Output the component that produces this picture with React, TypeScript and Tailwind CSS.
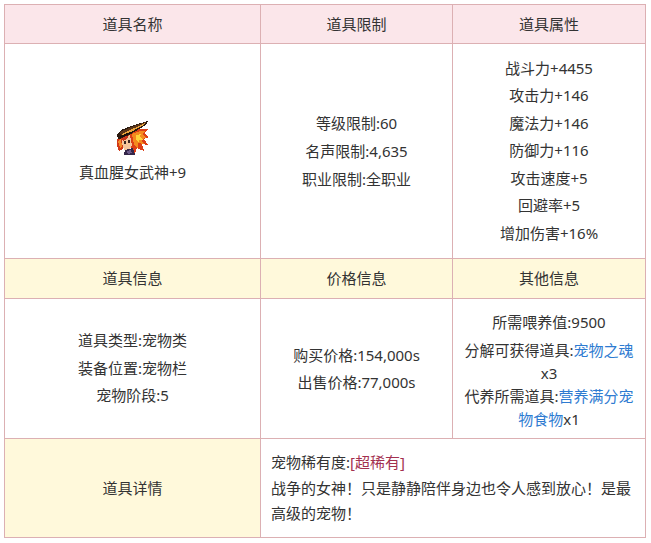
const font = { fontFamily: '"Noto Sans", "Noto Sans CJK SC", sans-serif' };

function PetSprite() {
  return (
    <svg width="32" height="34" viewBox="0 0 32 34" shapeRendering="crispEdges">
      {/* flames / hair */}
      <polygon points="12,12 22,8 31,8 27,12 32,16 27,18 31,24 25,23 27,30 20,27 18,33 14,26" fill="#dd3f17" />
      <polygon points="15,13 23,10 28,10 25,13 29,17 24,18 27,23 21,22 21,27 17,24" fill="#f48a1e" />
      <polygon points="19,14 24,13 23,16 26,19 22,19 22,22 19,19" fill="#ffd23a" />
      <polygon points="0,18 5,16 6,28 2,30 0,24" fill="#d23a18" />
      <polygon points="1,20 4,18 5,26 3,27" fill="#f28a2a" />
      {/* helmet */}
      <polygon points="0,14 4,9 14,5 24,2 31,0 29,4 22,8 14,13 6,17 1,18" fill="#2b1a10" />
      <polygon points="3,11 12,7 22,3 29,1 27,3 20,6 12,10 4,14" fill="#5a3418" />
      <polygon points="5,13 13,9 22,5 28,2 27,4 21,7 14,11 6,15" fill="#e9a33a" />
      <polygon points="2,16 8,13 16,10 14,12 8,15 3,17" fill="#1a100a" />
      {/* face */}
      <polygon points="6,17 13,14 15,24 12,30 7,29 5,22" fill="#f5c59c" />
      <polygon points="7,20 9,20 9,23 7,23" fill="#3a2320" />
      <polygon points="11,19 13,19 13,22 11,22" fill="#3a2320" />
      <polygon points="5,17 12,14 10,18 6,20" fill="#c9361b" />
      {/* body */}
      <polygon points="8,29 16,27 18,34 7,34" fill="#33264a" />
      <polygon points="10,30 14,29 15,32 11,33" fill="#6b5a8a" />
    </svg>
  );
}

function Link({ children }: { children: React.ReactNode }) {
  return <span className="text-[#2e7bd1]">{children}</span>;
}

export default function App() {
  const attrs = ["战斗力+4455", "攻击力+146", "魔法力+146", "防御力+116", "攻击速度+5", "回避率+5", "增加伤害+16%"];
  const limits = ["等级限制:60", "名声限制:4,635", "职业限制:全职业"];
  const info = ["道具类型:宠物类", "装备位置:宠物栏", "宠物阶段:5"];
  const prices = ["购买价格:154,000s", "出售价格:77,000s"];

  const cell = "border-r border-b border-[#dcb0b3] flex items-center justify-center text-center";

  return (
    <div className="bg-white w-[651px] h-[543px] pt-[4px] pl-[4px]" style={font}>
      <div className="grid grid-cols-[256px_192px_193px] grid-rows-[39px_215px_40px_140px_99px] w-[642px] border-l border-t border-[#dcb0b3] text-[15px] text-[#333]">
        {/* header 1 */}
        <div className={`${cell} bg-[#fbe6ea]`}>道具名称</div>
        <div className={`${cell} bg-[#fbe6ea]`}>道具限制</div>
        <div className={`${cell} bg-[#fbe6ea]`}>道具属性</div>

        {/* row 1 */}
        <div className={`${cell} flex-col gap-[6px] pt-[2px]`}>
          <PetSprite />
          <span className="leading-[22px]">真血腥女武神+9</span>
        </div>
        <div className={`${cell} flex-col leading-[28px]`}>
          {limits.map((l) => (
            <span key={l}>{l}</span>
          ))}
        </div>
        <div className={`${cell} flex-col leading-[27.5px]`}>
          {attrs.map((a) => (
            <span key={a}>{a}</span>
          ))}
        </div>

        {/* header 2 */}
        <div className={`${cell} bg-[#fff9db]`}>道具信息</div>
        <div className={`${cell} bg-[#fff9db]`}>价格信息</div>
        <div className={`${cell} bg-[#fff9db]`}>其他信息</div>

        {/* row 2 */}
        <div className={`${cell} flex-col leading-[27.5px]`}>
          {info.map((i) => (
            <span key={i}>{i}</span>
          ))}
        </div>
        <div className={`${cell} flex-col leading-[27px]`}>
          {prices.map((p) => (
            <span key={p}>{p}</span>
          ))}
        </div>
        <div className={`${cell} flex-col px-[10px] pt-[4px] leading-[23px]`}>
          <p className="leading-[22px] mb-[6px]">所需喂养值:9500</p>
          <p>
            分解可获得道具:<Link>宠物之魂</Link>
          </p>
          <p>x3</p>
          <p>
            代养所需道具:<Link>营养满分宠</Link>
          </p>
          <p>
            <Link>物食物</Link>x1
          </p>
        </div>

        {/* row 3 */}
        <div className={`${cell} bg-[#fff9db]`}>道具详情</div>
        <div className="col-span-2 border-r border-b border-[#dcb0b3] flex flex-col justify-center px-[10px] text-left">
          <p className="leading-[25px] mb-[1px]">
            宠物稀有度:<span className="text-[#a3304f]">[超稀有]</span>
          </p>
          <p className="leading-[25.5px]">战争的女神！只是静静陪伴身边也令人感到放心！是最高级的宠物！</p>
        </div>
      </div>
    </div>
  );
}
